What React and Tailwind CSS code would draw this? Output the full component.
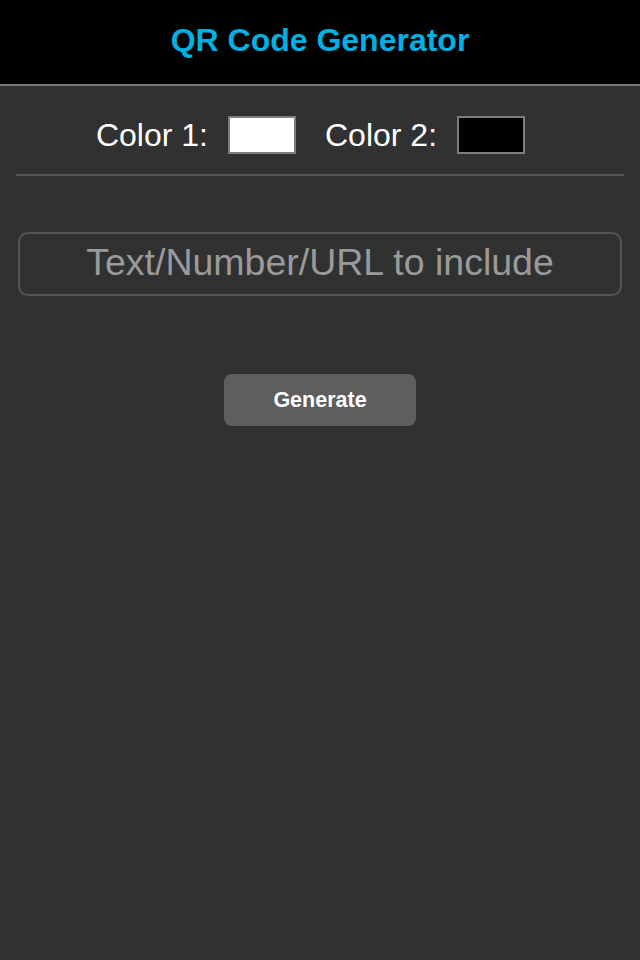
import React, { useState } from "react";

const App = () => {
  const [text, setText] = useState("");

  return (
    <div className="min-h-screen w-full bg-[#313131] font-['Liberation_Sans',Arial,sans-serif]">
      <header className="h-[86px] bg-black border-b-2 border-[#7a7a7a] flex items-center justify-center pb-[4px]">
        <h1 className="text-[32px] font-bold text-[#00b0e2] leading-none">QR Code Generator</h1>
      </header>

      <div className="px-4">
        <div className="h-[90px] pt-[10px] pr-[19px] flex items-center justify-center border-b-2 border-[#555555]">
          <span className="text-[32px] text-white leading-none mr-5">Color 1:</span>
          <div className="w-[68px] h-[38px] bg-white border-2 border-[#7d7d7d]" />
          <span className="text-[32px] text-white leading-none ml-[29px] mr-5">Color 2:</span>
          <div className="w-[68px] h-[38px] bg-black border-2 border-[#7d7d7d]" />
        </div>

        <div className="pt-[56px] px-[2px]">
          <input
            value={text}
            onChange={e => setText(e.target.value)}
            placeholder="Text/Number/URL to include"
            className="w-full h-[64px] pb-[3px] rounded-[10px] border-2 border-[#555555] bg-transparent text-center text-[37.5px] text-white placeholder:text-[#9a9a9a] outline-none"
          />
        </div>

        <div className="flex justify-center pt-[78px]">
          <button className="w-[192px] h-[52px] rounded-lg bg-[#5e5e5e] text-white text-[21.5px] font-bold">Generate</button>
        </div>
      </div>
    </div>
  );
};

export default App;
